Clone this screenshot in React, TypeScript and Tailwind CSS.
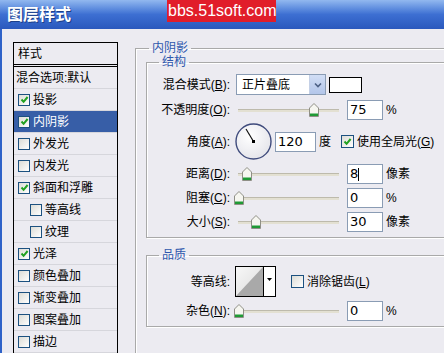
import React from "react";

const listItems = [
  { label: "投影", checked: true },
  { label: "内阴影", checked: true, active: true },
  { label: "外发光", checked: false },
  { label: "内发光", checked: false },
  { label: "斜面和浮雕", checked: true },
  { label: "等高线", checked: false, indent: true },
  { label: "纹理", checked: false, indent: true },
  { label: "光泽", checked: true },
  { label: "颜色叠加", checked: false },
  { label: "渐变叠加", checked: false },
  { label: "图案叠加", checked: false },
  { label: "描边", checked: false },
];

const CheckBox = ({ checked, className = "" }: { checked: boolean; className?: string }) => (
  <span
    className={`flex items-center justify-center shrink-0 border border-[#1c5180] bg-gradient-to-br from-[#dcdcd6] to-white ${className}`}
  >
    {checked && (
      <svg width="9" height="9" viewBox="0 0 9 9">
        <path d="M1.5 4.5 L3.6 6.8 L7.6 2" fill="none" stroke="#21a121" strokeWidth="2" />
      </svg>
    )}
  </span>
);

const Label = ({ text, k }: { text: string; k: string }) => (
  <span className="w-[83px] shrink-0 text-right">
    {text}(<u>{k}</u>):
  </span>
);

const Thumb = () => (
  <svg width="10" height="14" viewBox="0 0 10 14">
    <path d="M5 0.5 L9.5 5 V13.5 H0.5 V5 Z" fill="#f6f6f0" stroke="#8f8f86" />
    <rect x="1" y="10.5" width="8" height="2.5" fill="#1f9a35" />
  </svg>
);

const Slider = ({ pos }: { pos: number }) => (
  <div className="relative w-[102px] h-[20px] ml-[7px] shrink-0">
    <div className="absolute left-[1px] right-0 top-[9px] h-[3px] bg-[#e3e0d2] border-t border-[#bdbaac]" />
    <div className="absolute top-[3px]" style={{ left: pos - 5 }}>
      <Thumb />
    </div>
  </div>
);

const NumBox = ({ value, caret = false, className = "w-[36px] ml-[8px]" }: { value: string; caret?: boolean; className?: string }) => (
  <div
    className={`h-[20px] shrink-0 bg-white border border-[#8a9cb4] flex items-center pl-[2px] text-[13px] font-['DejaVu_Sans',sans-serif] ${className}`}
  >
    {value}
    {caret && <span className="w-px h-[13px] bg-black" />}
  </div>
);

const Dial = () => (
  <svg width="37" height="37" viewBox="0 0 37 37" className="ml-[5px] shrink-0">
    <defs>
      <radialGradient id="dg" cx="40%" cy="35%" r="70%">
        <stop offset="0%" stopColor="#ffffff" />
        <stop offset="100%" stopColor="#e4e4ea" />
      </radialGradient>
    </defs>
    <circle cx="18.5" cy="18.5" r="17.5" fill="url(#dg)" stroke="#3f4b7c" strokeWidth="1.4" />
    <line x1="18.5" y1="18.5" x2="11" y2="6" stroke="#111" strokeWidth="1.2" />
    <rect x="17" y="17" width="3" height="3" fill="#000" />
  </svg>
);

const Contour = () => (
  <svg width="41" height="31" viewBox="0 0 41 31" className="ml-[5px] shrink-0">
    <defs>
      <linearGradient id="cg" x1="0" y1="0" x2="1" y2="1">
        <stop offset="0%" stopColor="#f7f7f7" />
        <stop offset="100%" stopColor="#dcdcdc" />
      </linearGradient>
    </defs>
    <rect x="0.5" y="0.5" width="40" height="30" fill="#fff" stroke="#000" />
    <rect x="1" y="1" width="27" height="29" fill="url(#cg)" />
    <polygon points="1,30 28,1 28,30" fill="#a9a9a9" />
    <line x1="28.5" y1="1" x2="28.5" y2="30" stroke="#000" />
    <polygon points="32,12 37,12 34.5,15" fill="#000" />
  </svg>
);

const groupCls =
  "border border-[#a9a9a9] shadow-[1px_1px_0_#fff,inset_1px_1px_0_#fff] p-0 m-0 min-w-0";
const legendCls = "px-[3px] leading-[14px] text-[#2f58ad]";

export default function App() {
  return (
    <div className="w-[444px] h-[353px] overflow-hidden flex flex-col bg-[#ecebf1] text-[12px] leading-[14px] text-black font-['Liberation_Sans','Noto_Sans_CJK_SC',sans-serif]">
      {/* title bar */}
      <div className="relative h-[29px] shrink-0 flex items-center pl-[7px] bg-gradient-to-b from-[#92b8ef] via-[#3d6fd2] to-[#2a58bd]">
        <span className="text-white font-bold text-[16px] leading-[18px] [text-shadow:1px_1px_0_#1c3f8a]">
          图层样式
        </span>
        <div className="absolute left-[167px] top-0 w-[109px] h-[22px] bg-[#e11d2a] flex items-center pl-[1px] text-white text-[16px] font-['Liberation_Sans',sans-serif]">
          bbs.51soft.com
        </div>
      </div>

      <div className="flex flex-1 min-h-0">
        <div className="w-[2px] shrink-0 bg-[#2f62c8]" />

        {/* styles list */}
        <aside className="ml-[11px] mt-[13px] w-[105px] shrink-0 self-start border border-black">
          <div className="h-[24px] pl-[4px] pt-[4px] border-b-[3px] border-double border-black">样式</div>
          <div className="h-[22px] flex items-center pl-[2px] border-b border-[#d6d6dc]">混合选项:默认</div>
          {listItems.map((it) => (
            <div
              key={it.label}
              className={`h-[22px] flex items-center border-b border-[#d6d6dc] ${it.indent ? "pl-[16px]" : "pl-[4px]"} ${
                it.active ? "bg-[#375ea7] text-white" : ""
              }`}
            >
              <CheckBox checked={it.checked} className="w-[12px] h-[12px]" />
              <span className="ml-[3px]">{it.label}</span>
            </div>
          ))}
        </aside>

        {/* settings */}
        <div className="ml-[17px] mt-[12px] w-[330px] shrink-0">
          <fieldset className={`${groupCls} h-[320px]`}>
            <legend className={`${legendCls} ml-[13px]`}>内阴影</legend>
            <div className="pl-[10px]">
              <fieldset className={groupCls}>
                <legend className={`${legendCls} ml-[12px]`}>结构</legend>
                <div className="flex flex-col pb-[5px]">
                  <div className="flex items-center h-[21px] mt-[5px]">
                    <Label text="混合模式" k="B" />
                    <div className="ml-[6px] w-[90px] h-[21px] flex bg-white border border-[#8a9cb4]">
                      <span className="flex-1 pl-[5px] flex items-center">正片叠底</span>
                      <span className="w-[16px] flex items-center justify-center bg-gradient-to-b from-[#d2def5] to-[#b3c6ea] border-l border-[#c4d0e6]">
                        <svg width="8" height="6" viewBox="0 0 8 6">
                          <path d="M1 1.5 L4 4.5 L7 1.5" fill="none" stroke="#4d6185" strokeWidth="1.6" />
                        </svg>
                      </span>
                    </div>
                    <div className="ml-[3px] w-[33px] h-[16px] bg-white border border-black" />
                  </div>

                  <div className="flex items-center h-[20px] mt-[5px]">
                    <Label text="不透明度" k="O" />
                    <Slider pos={76.5} />
                    <NumBox value="75" />
                    <span className="ml-[3px]">%</span>
                  </div>

                  <div className="flex items-center h-[37px] mt-[3px]">
                    <Label text="角度" k="A" />
                    <Dial />
                    <NumBox value="120" className="w-[41px] ml-[3px]" />
                    <span className="ml-[3px]">度</span>
                    <CheckBox checked className="ml-[10px] w-[13px] h-[13px]" />
                    <span className="ml-[3px] whitespace-nowrap">
                      使用全局光(<u>G</u>)
                    </span>
                  </div>

                  <div className="flex items-center h-[20px] mt-[4px]">
                    <Label text="距离" k="D" />
                    <Slider pos={9.5} />
                    <NumBox value="8" caret />
                    <span className="ml-[3px]">像素</span>
                  </div>

                  <div className="flex items-center h-[20px] mt-[4px]">
                    <Label text="阻塞" k="C" />
                    <Slider pos={1.5} />
                    <NumBox value="0" />
                    <span className="ml-[3px]">%</span>
                  </div>

                  <div className="flex items-center h-[20px] mt-[4px]">
                    <Label text="大小" k="S" />
                    <Slider pos={18.5} />
                    <NumBox value="30" />
                    <span className="ml-[3px]">像素</span>
                  </div>
                </div>
              </fieldset>

              <fieldset className={`${groupCls} mt-[10px]`}>
                <legend className={`${legendCls} ml-[12px]`}>品质</legend>
                <div className="flex flex-col pb-[5px]">
                  <div className="flex items-center h-[31px] mt-[4px]">
                    <span className="w-[83px] shrink-0 text-right">等高线:</span>
                    <Contour />
                    <CheckBox checked={false} className="ml-[15px] w-[13px] h-[13px]" />
                    <span className="ml-[3px] whitespace-nowrap">
                      消除锯齿(<u>L</u>)
                    </span>
                  </div>
                  <div className="flex items-center h-[20px] mt-[4px]">
                    <Label text="杂色" k="N" />
                    <Slider pos={1.5} />
                    <NumBox value="0" />
                    <span className="ml-[3px]">%</span>
                  </div>
                </div>
              </fieldset>
            </div>
          </fieldset>
        </div>
      </div>
    </div>
  );
}
